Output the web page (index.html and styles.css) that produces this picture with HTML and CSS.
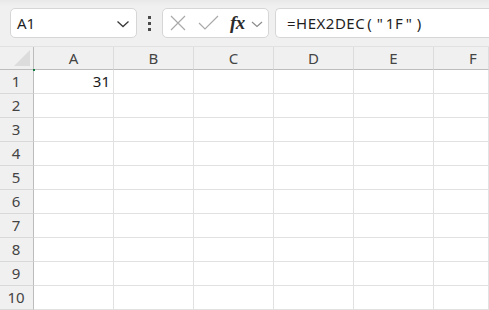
FILE: index.html
```html
<!DOCTYPE html>
<html>
<head>
<meta charset="utf-8">
<link rel="stylesheet" href="styles.css">
</head>
<body>
<div class="toolbar">
  <div class="namebox">
    <span class="name">A1</span>
    <svg class="chev" width="14" height="8" viewBox="0 0 14 8"><path d="M1.5 1.5 L7 6.5 L12.5 1.5" fill="none" stroke="#3a3a3a" stroke-width="1.3"/></svg>
  </div>
  <div class="dots"><i></i><i></i><i></i></div>
  <div class="fxbox">
    <svg class="ic-x" width="16" height="16" viewBox="0 0 16 16"><path d="M1 1 L15 15 M15 1 L1 15" stroke="#a9a9a9" stroke-width="1.2" fill="none"/></svg>
    <svg class="ic-ok" width="21" height="15" viewBox="0 0 21 15"><path d="M1 8 L7 14 L20 1" stroke="#a9a9a9" stroke-width="1.2" fill="none"/></svg>
    <span class="fx">fx</span>
    <svg class="chev-s" width="12" height="7" viewBox="0 0 12 7"><path d="M1 1 L6 5.5 L11 1" fill="none" stroke="#8a8a8a" stroke-width="1.1"/></svg>
  </div>
  <div class="formula">=HEX2DEC<span class="p">(</span><span class="q">"</span>1F<span class="q">"</span><span class="p">)</span></div>
</div>
<div class="sheet">
  <div class="corner"><svg width="33" height="22" viewBox="0 0 33 22"><polygon points="30,3 30,19 14,19" fill="#dcdcdc"/></svg><span class="sel-dot"></span></div>
  <div class="ch">A</div><div class="ch">B</div><div class="ch">C</div><div class="ch">D</div><div class="ch">E</div><div class="ch last">F</div>

  <div class="rh">1</div><div class="c num">31</div><div class="c"></div><div class="c"></div><div class="c"></div><div class="c"></div><div class="c"></div>
  <div class="rh">2</div><div class="c"></div><div class="c"></div><div class="c"></div><div class="c"></div><div class="c"></div><div class="c"></div>
  <div class="rh">3</div><div class="c"></div><div class="c"></div><div class="c"></div><div class="c"></div><div class="c"></div><div class="c"></div>
  <div class="rh">4</div><div class="c"></div><div class="c"></div><div class="c"></div><div class="c"></div><div class="c"></div><div class="c"></div>
  <div class="rh">5</div><div class="c"></div><div class="c"></div><div class="c"></div><div class="c"></div><div class="c"></div><div class="c"></div>
  <div class="rh">6</div><div class="c"></div><div class="c"></div><div class="c"></div><div class="c"></div><div class="c"></div><div class="c"></div>
  <div class="rh">7</div><div class="c"></div><div class="c"></div><div class="c"></div><div class="c"></div><div class="c"></div><div class="c"></div>
  <div class="rh">8</div><div class="c"></div><div class="c"></div><div class="c"></div><div class="c"></div><div class="c"></div><div class="c"></div>
  <div class="rh">9</div><div class="c"></div><div class="c"></div><div class="c"></div><div class="c"></div><div class="c"></div><div class="c"></div>
  <div class="rh">10</div><div class="c"></div><div class="c"></div><div class="c"></div><div class="c"></div><div class="c"></div><div class="c"></div>
</div>
</body>
</html>
```

FILE: styles.css
```css
html, body {
  margin: 0;
  padding: 0;
  width: 489px;
  height: 310px;
  overflow: hidden;
  background: #ffffff;
  font-family: "Noto Sans", "Open Sans", sans-serif;
}

.toolbar {
  height: 47px;
  box-sizing: border-box;
  padding-top: 8px;
  display: flex;
  align-items: flex-start;
  background: linear-gradient(#e9e9e9 0px, #f0f0f0 7px, #f0f0f0 100%);
  border-bottom: 1px solid #e2e2e2;
  white-space: nowrap;
  overflow: hidden;
}

.toolbar > * { flex-shrink: 0; }

.namebox {
  margin-left: 10px;
  width: 127px;
  height: 30px;
  box-sizing: border-box;
  background: #fff;
  border: 1px solid #d6d6d6;
  border-radius: 5px;
  display: flex;
  align-items: center;
  justify-content: space-between;
  padding: 0 6px 0 6px;
}

.name {
  font-size: 15px;
  color: #1f1f1f;
}

.chev { margin-top: 2px; }

.dots {
  width: 25px;
  height: 30px;
  display: flex;
  flex-direction: column;
  align-items: center;
  justify-content: center;
  gap: 3px;
}

.dots i {
  display: block;
  width: 3px;
  height: 3px;
  background: #4a4a4a;
}

.fxbox {
  width: 107px;
  height: 30px;
  box-sizing: border-box;
  background: #fff;
  border: 1px solid #d6d6d6;
  border-radius: 5px;
  display: flex;
  align-items: center;
  padding-left: 7px;
}

.ic-x { margin-right: 12px; }
.ic-ok { margin-right: 11px; margin-top: -1px; }

.fx {
  font-family: "Liberation Serif", "DejaVu Serif", serif;
  font-style: italic;
  font-weight: bold;
  font-size: 19px;
  color: #2b2b2b;
  line-height: 1;
  margin-top: -2px;
  letter-spacing: -0.5px;
}

.chev-s { margin-left: 6px; margin-top: 2px; }

.formula {
  flex: 1 0 0;
  margin-left: 6px;
  height: 30px;
  box-sizing: border-box;
  background: #fff;
  border: 1px solid #d6d6d6;
  border-right: none;
  border-radius: 5px 0 0 5px;
  padding-left: 11px;
  font-size: 15px;
  line-height: 28px;
  color: #1f1f1f;
  letter-spacing: 0.5px;
}

.formula .p { margin: 0 2px; }
.formula .q { margin: 0 2.5px; }

.sheet {
  display: grid;
  grid-template-columns: 34px repeat(5, 80px) 55px;
  grid-template-rows: 23px repeat(10, 24px);
  overflow: hidden;
}

.sheet > div {
  box-sizing: border-box;
}

.corner {
  position: relative;
  background: #f0f0f0;
  border-right: 1px solid #bdbdbd;
  border-bottom: 1px solid #bdbdbd;
}

.corner svg { display: block; }

.sel-dot {
  position: absolute;
  right: -2px;
  bottom: -2px;
  width: 2px;
  height: 2px;
  background: #107c41;
}

.ch {
  background: #f0f0f0;
  border-right: 1px solid #dcdcdc;
  border-bottom: 1px solid #bdbdbd;
  text-align: center;
  font-size: 15px;
  line-height: 22px;
  color: #444;
}

.ch.last {
  text-align: left;
  padding-left: 35px;
}

.rh {
  background: #f0f0f0;
  border-right: 1px solid #bdbdbd;
  border-bottom: 1px solid #d9d9d9;
  text-align: center;
  font-size: 15px;
  line-height: 23px;
  color: #444;
  padding-right: 1px;
}

.c {
  border-right: 1px solid #e1e1e1;
  border-bottom: 1px solid #e1e1e1;
}

.num {
  text-align: right;
  padding-right: 3px;
  font-size: 15px;
  line-height: 23px;
  color: #1a1a1a;
}
```
